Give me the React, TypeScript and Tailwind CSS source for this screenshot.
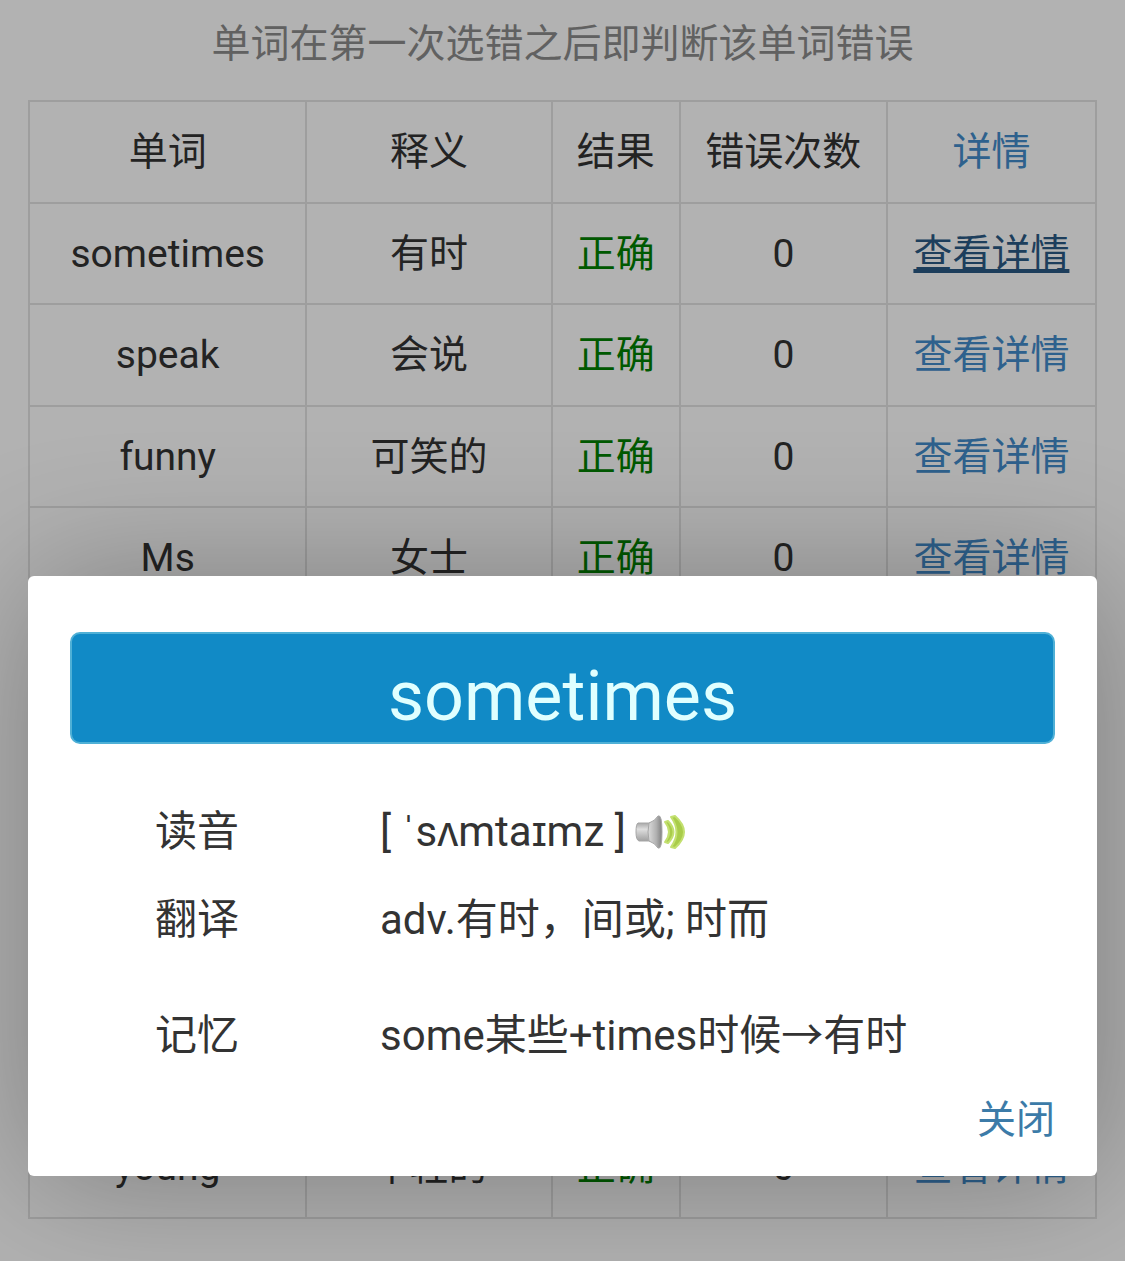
type Row = { word: string; meaning: string; wrong: number; visited?: boolean }

const rows: (Row | null)[] = [
    { word: 'sometimes', meaning: '有时', wrong: 0, visited: true },
    { word: 'speak', meaning: '会说', wrong: 0 },
    { word: 'funny', meaning: '可笑的', wrong: 0 },
    { word: 'Ms', meaning: '女士', wrong: 0 },
    null,
    null,
    null,
    null,
    null,
    { word: 'young', meaning: '年轻的', wrong: 0 },
]

const SpeakerIcon = () => (
    <svg viewBox="0 0 52 38" className="h-[38px] w-[52px]" aria-hidden="true">
        <defs>
            <linearGradient id="box" x1="0" y1="0" x2="0" y2="1">
                <stop offset="0" stopColor="#a8a8a8" />
                <stop offset="0.35" stopColor="#dedede" />
                <stop offset="1" stopColor="#a0a0a0" />
            </linearGradient>
            <linearGradient id="cone" x1="0" y1="0" x2="1" y2="0">
                <stop offset="0" stopColor="#dcdcdc" />
                <stop offset="0.6" stopColor="#b0b0b0" />
                <stop offset="1" stopColor="#808080" />
            </linearGradient>
        </defs>
        <path d="M4 10h13v18H5q-3-1-3-9t2-9z" fill="url(#box)" stroke="#a6a6a6" />
        <path d="M15 10q6-2 9-7 4-2 4 16t-4 16q-3-5-9-7-2-9 0-18z" fill="url(#cone)" stroke="#a6a6a6" />
        <path d="M31 9q8 10 0 20l3 1q11-11 0-22z" fill="#a9cc4a" stroke="#c3e070" strokeWidth="2" strokeLinejoin="round" />
        <path d="M37 4q11 15 0 30l4 1q18-16 0-32z" fill="#a9cc4a" stroke="#c3e070" strokeWidth="2" strokeLinejoin="round" />
    </svg>
)

const ResultTable = () => (
    <table className="w-full table-fixed border-collapse text-center text-[39px] leading-[56px] text-[#333]">
        <thead>
            <tr className="h-[102px]">
                <th className="w-[26%] border-2 border-[#e2e2e2] font-normal">单词</th>
                <th className="w-[23%] border-2 border-[#e2e2e2] font-normal">释义</th>
                <th className="w-[12%] border-2 border-[#e2e2e2] font-normal">结果</th>
                <th className="w-[19.4%] border-2 border-[#e2e2e2] font-normal">错误次数</th>
                <th className="border-2 border-[#e2e2e2] font-normal text-[#428bca]">详情</th>
            </tr>
        </thead>
        <tbody>
            {rows.map((row, i) => (
                <tr key={i} className="h-[101px] even:h-[102px]">
                    <td className="border-2 border-[#e2e2e2]">{row?.word}</td>
                    <td className="border-2 border-[#e2e2e2]">{row?.meaning}</td>
                    <td className="border-2 border-[#e2e2e2] text-[#008000]">{row && '正确'}</td>
                    <td className="border-2 border-[#e2e2e2]">{row?.wrong}</td>
                    <td className="border-2 border-[#e2e2e2]">
                        {row && (
                            <a href={`#${row.word}`}
                               className={row.visited
                                   ? 'text-[#2a5a85] underline decoration-4 underline-offset-2 [text-decoration-skip-ink:none]'
                                   : 'text-[#428bca]'}>
                                查看详情
                            </a>
                        )}
                    </td>
                </tr>
            ))}
        </tbody>
    </table>
)

const WordDialog = () => (
    <div role="dialog" aria-labelledby="word"
         className="rounded-md bg-white px-[42px] pt-14 pb-7 text-[#333] shadow-[3px_3px_140px_rgba(0,0,0,0.3)]">
        <h2 id="word" className="h-[112px] rounded-[10px] border-2 border-[#4fb0d6] bg-[#118ac6] pt-2 text-center text-[70px] leading-[108px] text-[#e0ffff]">
            sometimes
        </h2>
        <dl className="mt-11 grid grid-cols-[225px_1fr] pl-[85px] text-[42px] leading-[88px]">
            <dt>读音</dt>
            <dd className="flex items-center gap-2">
                [ ˈsʌmtaɪmz ]
                <button type="button" aria-label="播放读音"><SpeakerIcon /></button>
            </dd>
            <dt>翻译</dt>
            <dd>adv.有时，间或; 时而</dd>
            <dt className="mt-7">记忆</dt>
            <dd className="mt-7">some某些+times时候→有时</dd>
        </dl>
        <div className="mt-3 flex justify-end">
            <button type="button" className="text-[39px] leading-[56px] text-[#3c7ba8]">关闭</button>
        </div>
    </div>
)

export default () => {
    return (
        <div className="relative min-h-screen overflow-hidden bg-white font-[Roboto,'Noto_Sans_CJK_SC',sans-serif]" lang="zh-CN">
            <main className="px-7 pt-4 pb-10">
                <p className="mb-7 text-center text-[39px] leading-[56px] text-[#8c8c8c]">
                    单词在第一次选错之后即判断该单词错误
                </p>
                <ResultTable />
            </main>
            <div className="absolute inset-0 bg-black/30 px-7 pt-[576px]">
                <WordDialog />
            </div>
        </div>
    )
}
